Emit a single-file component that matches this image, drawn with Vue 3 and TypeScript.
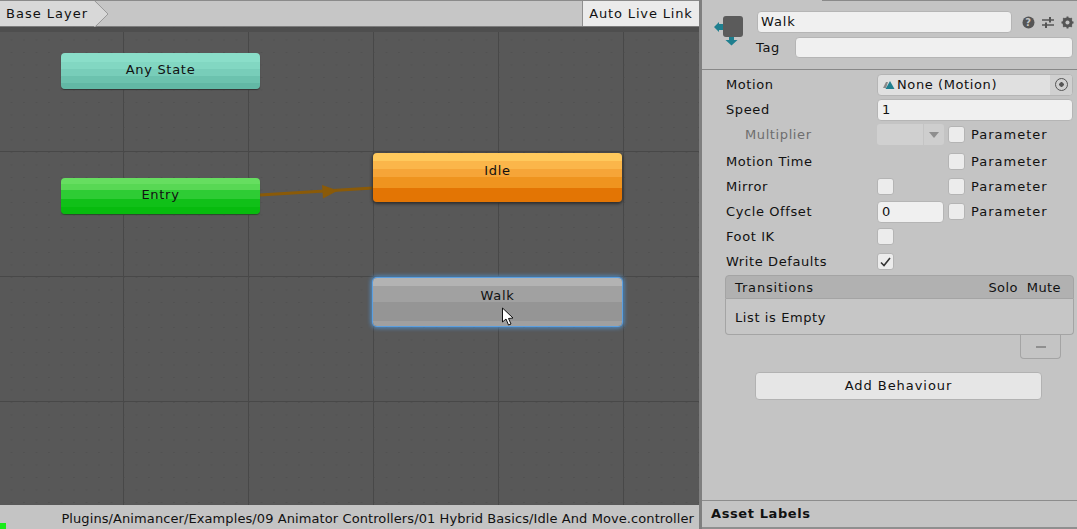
<script setup lang="ts">
interface Row {
  label: string
  kind?: 'object' | 'text' | 'select' | 'check' | 'none'
  value?: string
  checked?: boolean
  param?: boolean
  dim?: boolean
}

const rows: Row[] = [
  { label: 'Motion', kind: 'object' },
  { label: 'Speed', kind: 'text', value: '1' },
  { label: 'Multiplier', kind: 'select', param: true, dim: true },
  { label: 'Motion Time', kind: 'none', param: true },
  { label: 'Mirror', kind: 'check', param: true },
  { label: 'Cycle Offset', kind: 'text', value: '0', param: true },
  { label: 'Foot IK', kind: 'check' },
  { label: 'Write Defaults', kind: 'check', checked: true }
]
</script>

<template>
  <div class="window">
    <section class="graph">
      <header class="toolbar">
        <div class="crumb">
          <span>Base Layer</span>
          <svg class="crumb-tip" width="16" height="26" viewBox="0 0 16 26">
            <path d="M0 0 L14 13 L0 26 Z" fill="#d8d8d8" />
            <path d="M1 0 L14 13 L1 26" fill="none" stroke="#9a9a9a" />
          </svg>
        </div>
        <button class="live-link">Auto Live Link</button>
      </header>

      <div class="canvas">
        <div class="top-band"></div>
        <svg class="arrow" width="699" height="478" viewBox="0 0 699 478">
          <defs>
            <pattern id="dots" width="12.5" height="12.5" patternUnits="userSpaceOnUse">
              <rect x="11" y="0" width="1" height="1" fill="#4a4a4a" />
            </pattern>
          </defs>
          <rect width="699" height="478" fill="url(#dots)" />
          <path d="M260 168 L373 161" stroke="#8a5a08" stroke-width="3" fill="none" />
          <path d="M322 158 L338 163.5 L323 171.5 Z" fill="#8a5a08" />
        </svg>
        <div class="node any">Any State</div>
        <div class="node entry">Entry</div>
        <div class="node idle">Idle</div>
        <div class="node walk">Walk</div>
        <svg class="cursor" width="14" height="20" viewBox="0 0 14 20">
          <path d="M1.5 1 L1.5 15 L5 12 L7.5 18 L10 17 L7.5 11.5 L12 11 Z" fill="#fff" stroke="#111" stroke-width="1" />
        </svg>
      </div>

      <footer class="status">
        <i class="progress"></i>
        <span>Plugins/Animancer/Examples/09 Animator Controllers/01 Hybrid Basics/Idle And Move.controller</span>
      </footer>
    </section>

    <aside class="inspector">
      <header class="head">
        <svg class="state-icon" width="32" height="32" viewBox="0 0 32 32">
          <path d="M0 11 L5 6 L5 8 L10 8 L10 14 L5 14 L5 16 Z" fill="#1f7f8f" />
          <path d="M15 20 L20 20 L20 24 L23.5 24 L17.5 29.5 L11.5 24 L15 24 Z" fill="#1f7f8f" />
          <rect x="9" y="0" width="20" height="21" rx="3" fill="#5b5b5b" />
        </svg>
        <div class="head-fields">
          <div class="name-row">
            <div class="field name">Walk</div>
            <div class="tools">
              <svg width="13" height="13" viewBox="0 0 13 13">
                <circle cx="6.5" cy="6.5" r="6" fill="#555" />
                <text x="6.5" y="10" text-anchor="middle" class="q">?</text>
              </svg>
              <svg width="14" height="13" viewBox="0 0 14 13">
                <path d="M1 4 H13 M1 9 H13" stroke="#555" stroke-width="1.5" />
                <path d="M9 1 V6.5 M5 6.5 V12" stroke="#555" stroke-width="2" />
              </svg>
              <svg width="13" height="13" viewBox="0 0 14 14">
                <circle cx="7" cy="7" r="4" fill="none" stroke="#555" stroke-width="3" />
                <path d="M7 0.5 V13.5 M0.5 7 H13.5 M2.4 2.4 L11.6 11.6 M11.6 2.4 L2.4 11.6" stroke="#555" stroke-width="2" />
                <circle cx="7" cy="7" r="2.2" fill="#c4c4c4" />
              </svg>
            </div>
          </div>
          <div class="tag-row">
            <span>Tag</span>
            <div class="field tag"></div>
          </div>
        </div>
      </header>

      <div class="props">
        <div v-for="row in rows" :key="row.label" class="row" :class="{ dim: row.dim }">
          <span class="label">{{ row.label }}</span>
          <div class="value" :class="{ full: !row.param }">
            <div v-if="row.kind === 'object'" class="field object">
              <svg width="12" height="10" viewBox="0 0 12 10">
                <path d="M0 8 L3 2 L5 2 L3 8 Z" fill="#888" />
                <path d="M2.5 9 L7 1 L11.5 9 Z" fill="#1f7f8f" />
              </svg>
              <span>None (Motion)</span>
              <span class="picker"><i></i></span>
            </div>
            <div v-else-if="row.kind === 'text'" class="field num">{{ row.value }}</div>
            <div v-else-if="row.kind === 'select'" class="select"><span></span><b></b></div>
            <div v-else-if="row.kind === 'check'" class="box">
              <svg v-if="row.checked" width="11" height="10" viewBox="0 0 11 10">
                <path d="M1 5.5 L4 8.5 L10 1" fill="none" stroke="#333" stroke-width="1.6" />
              </svg>
            </div>
          </div>
          <div v-if="row.param" class="param">
            <div class="box"></div>
            <span>Parameter</span>
          </div>
        </div>
      </div>

      <div class="transitions">
        <div class="t-head">
          <span>Transitions</span>
          <span class="t-cols"><span>Solo</span><span>Mute</span></span>
        </div>
        <div class="t-body">List is Empty</div>
        <div class="t-foot"><i></i></div>
      </div>

      <button class="add">Add Behaviour</button>

      <footer class="labels">Asset Labels</footer>
    </aside>
  </div>
</template>

<style scoped>
.window {
  display: flex;
  width: 1077px;
  height: 529px;
  overflow: hidden;
  background: #c4c4c4;
  color: #111;
  font: 13px/16px "DejaVu Sans", sans-serif;
}

/* graph pane */
.graph {
  display: flex;
  flex-direction: column;
  width: 699px;
  flex: none;
}
.toolbar {
  display: flex;
  justify-content: space-between;
  height: 27px;
  flex: none;
  border-top: 1px solid #8a8a8a;
  border-bottom: 1px solid #7c7c7c;
  box-sizing: border-box;
  background: #c6c6c6;
}
.crumb {
  position: relative;
  display: flex;
  align-items: center;
  width: 94px;
  padding-left: 6px;
  box-sizing: border-box;
  background: #d8d8d8;
  letter-spacing: 1px;
}
.crumb-tip {
  position: absolute;
  left: 94px;
  top: 0;
}
.live-link {
  width: 117px;
  height: 25px;
  padding: 0;
  border: 0;
  border-left: 1px solid #8f8f8f;
  border-radius: 0;
  background: #ebebeb;
  color: #111;
  font: inherit;
  letter-spacing: 0.85px;
}
.canvas {
  position: relative;
  flex: 1;
  overflow: hidden;
  background-color: #585858;
  background-image:
    linear-gradient(to right, #484848 1px, transparent 1px),
    linear-gradient(to bottom, #484848 1px, transparent 1px);
  background-size: 125px 125px;
  background-position: 123px 0, 0 124px;
}
.top-band {
  position: absolute;
  left: 0;
  right: 0;
  top: 0;
  height: 5px;
  background: #4e4e4e;
}
.arrow {
  position: absolute;
  left: 0;
  top: 0;
}
.node {
  position: absolute;
  display: flex;
  justify-content: center;
  box-sizing: border-box;
  padding-top: 9px;
  border-radius: 4px;
  color: #111;
  letter-spacing: 0.7px;
}
.any {
  left: 61px;
  top: 26px;
  width: 199px;
  height: 36px;
  background: linear-gradient(#8adec9 0 25%, #82d7c2 25% 45%, #78cdb9 45% 65%, #6cc2ae 65% 82%, #62b8a5 82%);
  box-shadow: 0 1px 1px #333;
}
.entry {
  left: 61px;
  top: 151px;
  width: 199px;
  height: 36px;
  background: linear-gradient(#66de60 0 16%, #58d854 16% 34%, #2ecc34 34% 58%, #10c018 58% 80%, #07bb0e 80%);
  box-shadow: 0 1px 1px #2b4a2b;
}
.idle {
  left: 373px;
  top: 126px;
  width: 249px;
  height: 49px;
  padding-top: 10px;
  background: linear-gradient(#ffc95c 0 16%, #fbb64a 16% 32%, #f6a538 32% 48%, #ef941f 48% 72%, #e37504 72%);
  box-shadow: 0 1px 3px 1px #2f2f2f;
}
.walk {
  left: 373px;
  top: 251px;
  width: 249px;
  height: 48px;
  padding-top: 10px;
  background: linear-gradient(#b3b3b3 0 16%, #a1a1a1 16% 49%, #959595 49% 90%, #a0a0a0 90%);
  box-shadow: 0 0 0 1px #5b9fe0, 0 0 4px 2px #4f8fcb;
}
.cursor {
  position: absolute;
  left: 501px;
  top: 280px;
}
.status {
  position: relative;
  display: flex;
  justify-content: flex-end;
  align-items: center;
  height: 24px;
  flex: none;
  box-sizing: border-box;
  padding: 3px 5px 0 0;
  background: #c4c4c4;
  letter-spacing: 0.09px;
  white-space: nowrap;
}
.progress {
  position: absolute;
  left: 0;
  bottom: 0;
  width: 6px;
  height: 6px;
  background: #19ec19;
}

/* inspector pane */
.inspector {
  display: flex;
  flex-direction: column;
  flex: 1;
  min-width: 0;
  box-sizing: border-box;
  border-left: 3px solid #7f7f7f;
  letter-spacing: 0.6px;
}
.head {
  position: relative;
  display: flex;
  height: 70px;
  flex: none;
  box-sizing: border-box;
  padding: 11px 4px 0 12px;
  border-bottom: 1px solid #888;
}
.head::before {
  content: "";
  position: absolute;
  left: 120px;
  right: 0;
  top: 0;
  height: 1px;
  background: #8a8a8a;
}
.state-icon {
  margin: 5px 11px 0 0;
  flex: none;
}
.head-fields {
  display: flex;
  flex-direction: column;
  gap: 4px;
  flex: 1;
  min-width: 0;
}
.name-row {
  display: flex;
  align-items: flex-start;
}
.tag-row {
  display: flex;
  align-items: center;
}
.tag-row span {
  width: 39px;
  margin-left: -1px;
}
.field {
  box-sizing: border-box;
  border: 1px solid #b5b5b5;
  border-radius: 4px;
  background: #f0f0f0;
}
.name {
  flex: none;
  width: 255px;
  height: 22px;
  padding: 2px 3px;
  letter-spacing: 0.9px;
}
.tag {
  flex: 1;
  height: 21px;
}
.tools {
  display: flex;
  align-items: center;
  gap: 6px;
  flex: none;
  margin: 5px 0 0 10px;
}
.q {
  fill: #c4c4c4;
  font: bold 10px "DejaVu Sans", sans-serif;
}
.props {
  display: flex;
  flex-direction: column;
  gap: 2px;
  padding: 3px 4px 0 24px;
}
.row {
  display: flex;
  align-items: center;
  height: 23px;
}
.row:nth-child(3) {
  margin-bottom: 2px;
}
.dim .label {
  padding-left: 19px;
  color: #6e6e6e;
}
.label {
  width: 151px;
  box-sizing: border-box;
  flex: none;
}
.value {
  width: 67px;
  flex: none;
}
.value.full {
  width: auto;
  flex: 1;
}
.num {
  height: 22px;
  padding: 2px 4px;
}
.object {
  display: flex;
  align-items: center;
  height: 22px;
  padding-left: 5px;
  gap: 2px;
  background: #e0e0e0;
  position: relative;
}
.picker {
  position: absolute;
  right: 0;
  top: 0;
  display: flex;
  align-items: center;
  justify-content: center;
  width: 22px;
  height: 20px;
  border-radius: 0 3px 3px 0;
  background: #d0d0d0;
}
.picker i {
  width: 13px;
  height: 13px;
  box-sizing: border-box;
  border: 1px solid #555;
  border-radius: 50%;
  background: radial-gradient(circle, #555 0 2px, transparent 2.5px);
}
.select {
  display: flex;
  height: 21px;
  gap: 1px;
}
.select span {
  flex: 1;
  border-radius: 3px 0 0 3px;
  background: #d0d0d0;
}
.select b {
  position: relative;
  width: 20px;
  border-radius: 0 3px 3px 0;
  background: #cecece;
}
.select b::after {
  content: "";
  position: absolute;
  left: 5px;
  top: 8px;
  border: 5px solid transparent;
  border-top: 6px solid #8e8e8e;
  border-bottom: 0;
}
.box {
  display: flex;
  align-items: center;
  justify-content: center;
  width: 17px;
  height: 17px;
  box-sizing: border-box;
  border: 1px solid #b4b4b4;
  border-radius: 3px;
  background: #ececec;
}
.param {
  display: flex;
  align-items: center;
  gap: 6px;
  margin-left: 4px;
  letter-spacing: 1px;
}
.transitions {
  margin: 2px 3px 0 23px;
}
.t-head {
  display: flex;
  justify-content: space-between;
  align-items: center;
  height: 24px;
  box-sizing: border-box;
  padding: 1px 12px 0 9px;
  border: 1px solid #a4a4a4;
  border-radius: 4px 4px 0 0;
  background: #b1b1b1;
  letter-spacing: 0.85px;
}
.t-cols {
  display: flex;
  gap: 9px;
  letter-spacing: 0.4px;
}
.t-body {
  height: 36px;
  box-sizing: border-box;
  padding: 11px 9px 0;
  border: 1px solid #a4a4a4;
  border-top: 0;
  border-radius: 0 0 4px 4px;
  background: #c6c6c6;
}
.t-foot {
  display: flex;
  align-items: center;
  justify-content: center;
  width: 41px;
  height: 24px;
  box-sizing: border-box;
  margin-left: 295px;
  border: 1px solid #a4a4a4;
  border-top: 0;
  border-radius: 0 0 4px 4px;
}
.t-foot i {
  width: 10px;
  height: 2px;
  background: #8f8f8f;
}
.add {
  align-self: flex-start;
  width: 287px;
  height: 28px;
  margin: 13px 0 0 53px;
  padding: 0;
  border: 1px solid #b2b2b2;
  border-radius: 4px;
  background: #e6e6e6;
  color: #111;
  font: inherit;
  letter-spacing: 0.95px;
}
.labels {
  margin-top: auto;
  height: 29px;
  box-sizing: border-box;
  padding: 5px 0 0 9px;
  border-top: 1px solid #8c8c8c;
  border-bottom: 2px solid #8f8f8f;
  font-weight: 700;
}
</style>

<style>
html,
body {
  margin: 0;
  background: #c4c4c4;
}
</style>
